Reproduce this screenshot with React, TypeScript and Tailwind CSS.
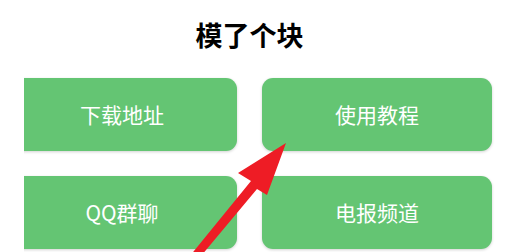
import React from 'react';

const links = ['下载地址', '使用教程', 'QQ群聊', '电报频道'];

export default function App() {
  return (
    <div
      className="relative w-[527px] h-[252px] overflow-hidden bg-white"
      style={{ fontFamily: '"Noto Sans CJK SC", "Noto Sans", sans-serif' }}
    >
      <div className="pl-[24px]">
        <div className="overflow-hidden pb-[4px]">
          <div className="ml-[-17px] w-[485px]">
            {/* Title */}
            <h1 className="pt-[17px] text-center text-[27px] leading-[36px] font-bold text-black">
              模了个块
            </h1>

            {/* Link buttons */}
            <div className="mt-[25px] grid grid-cols-2 gap-[25px]">
              {links.map((label) => (
                <button
                  key={label}
                  className="h-[73px] rounded-[11px] bg-[#64c573] text-[21px] text-white shadow-[0_1px_3px_rgba(0,0,0,0.18)] flex items-center justify-center"
                >
                  {label}
                </button>
              ))}
            </div>
          </div>
        </div>
      </div>

      {/* Arrow overlay */}
      <svg
        className="absolute inset-0 pointer-events-none"
        width="527"
        height="252"
        viewBox="0 0 527 252"
      >
        <polygon
          points="286,143 238,173 251,181 185,262 196,262 257,189 267,195"
          fill="#ee1c25"
        />
      </svg>
    </div>
  );
}
